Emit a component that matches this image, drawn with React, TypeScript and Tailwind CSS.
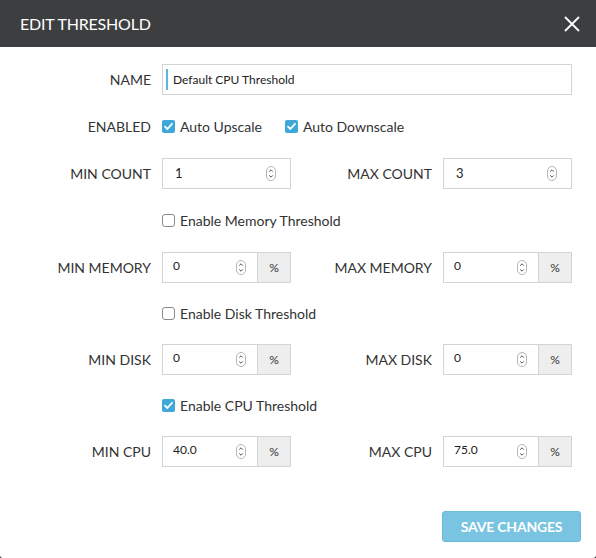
import React from "react";

const font = { fontFamily: "Lato, 'Open Sans', sans-serif" };

function Spinner() {
  return (
    <svg width="10" height="15" viewBox="0 0 10 15" className="shrink-0">
      <rect x="0.5" y="0.5" width="9" height="14" rx="4.5" fill="#fff" stroke="#b5b5b5" />
      <path d="M3.2 5.6 L5 3.8 L6.8 5.6" fill="none" stroke="#555" strokeWidth="1" />
      <path d="M3.2 9.4 L5 11.2 L6.8 9.4" fill="none" stroke="#555" strokeWidth="1" />
    </svg>
  );
}

function Check({ checked }: { checked: boolean }) {
  if (checked)
    return (
      <span className="w-[13px] h-[13px] rounded-[2px] bg-[#3ea8d8] flex items-center justify-center shrink-0">
        <svg width="11" height="11" viewBox="0 0 11 11">
          <path d="M2 5.6 L4.4 8 L9 2.8" fill="none" stroke="#fff" strokeWidth="1.8" strokeLinecap="round" strokeLinejoin="round" />
        </svg>
      </span>
    );
  return <span className="w-[13px] h-[13px] rounded-[3px] border border-[#8a8a8a] bg-white shrink-0" />;
}

function Label({ w, children }: { w: string; children: React.ReactNode }) {
  return <div className={`${w} text-right text-[14px] text-[#333] shrink-0 pr-[11px]`}>{children}</div>;
}

function CountInput({ value }: { value: string }) {
  return (
    <div className="w-[129px] h-[31px] border border-[#d4d4d4] bg-white flex items-center pl-[12px] pr-[14px] shrink-0">
      <span className="flex-1 text-[13px] text-[#222]">{value}</span>
      <Spinner />
    </div>
  );
}

function PctInput({ value }: { value: string }) {
  return (
    <div className="w-[129px] h-[31px] flex shrink-0">
      <div className="w-[96px] h-full border border-[#d4d4d4] bg-white flex items-center pl-[10px] pr-[11px]">
        <span className="flex-1 text-[12px] text-[#222] -mt-[3px]">{value}</span>
        <Spinner />
      </div>
      <div className="flex-1 h-full border border-l-0 border-[#d4d4d4] bg-[#eeeeee] flex items-center justify-center text-[12px] text-[#333]">
        %
      </div>
    </div>
  );
}

function CheckRow({ checked, label, mt }: { checked: boolean; label: string; mt: string }) {
  return (
    <div className={`${mt} h-[31px] flex items-center pl-[162px] gap-[5px] text-[14px] text-[#333]`}>
      <Check checked={checked} />
      <span>{label}</span>
    </div>
  );
}

export default function App() {
  return (
    <div className="w-[596px] h-[558px] bg-[#3a3a3a]" style={font}>
      <div className="w-[596px] h-[558px] bg-white rounded-b-[3px] flex flex-col">
        <div className="h-[47px] bg-[#3d3e40] flex items-center justify-between pl-[20px] pr-[15px]">
          <span className="text-white text-[16px] tracking-[-0.2px]">EDIT THRESHOLD</span>
          <svg width="18" height="18" viewBox="0 0 18 18">
            <path d="M2 2 L16 16 M16 2 L2 16" stroke="#fff" strokeWidth="1.8" />
          </svg>
        </div>

        <div className="pt-[17px] flex flex-col">
          <div className="h-[31px] flex items-center">
            <Label w="w-[162px]">NAME</Label>
            <div className="w-[410px] h-[31px] border border-[#d4d4d4] bg-white flex items-center pl-[3px]">
              <span className="w-[2px] h-[21px] bg-[#5ab6de]" />
              <span className="ml-[5px] text-[12px] text-[#222]">Default CPU Threshold</span>
            </div>
          </div>

          <div className="mt-4 h-[31px] flex items-center">
            <Label w="w-[162px]">ENABLED</Label>
            <div className="flex items-center gap-[5px] text-[14px] text-[#333]">
              <Check checked />
              <span>Auto Upscale</span>
            </div>
            <div className="flex items-center gap-[5px] text-[14px] text-[#333] ml-[23px]">
              <Check checked />
              <span>Auto Downscale</span>
            </div>
          </div>

          <div className="mt-4 h-[31px] flex items-center">
            <Label w="w-[162px]">MIN COUNT</Label>
            <CountInput value="1" />
            <Label w="w-[152px]">MAX COUNT</Label>
            <CountInput value="3" />
          </div>

          <CheckRow checked={false} label="Enable Memory Threshold" mt="mt-4" />

          <div className="mt-4 h-[31px] flex items-center">
            <Label w="w-[162px]">MIN MEMORY</Label>
            <PctInput value="0" />
            <Label w="w-[152px]">MAX MEMORY</Label>
            <PctInput value="0" />
          </div>

          <CheckRow checked={false} label="Enable Disk Threshold" mt="mt-[15px]" />

          <div className="mt-[15px] h-[31px] flex items-center">
            <Label w="w-[162px]">MIN DISK</Label>
            <PctInput value="0" />
            <Label w="w-[152px]">MAX DISK</Label>
            <PctInput value="0" />
          </div>

          <CheckRow checked label="Enable CPU Threshold" mt="mt-[15px]" />

          <div className="mt-[15px] h-[31px] flex items-center">
            <Label w="w-[162px]">MIN CPU</Label>
            <PctInput value="40.0" />
            <Label w="w-[152px]">MAX CPU</Label>
            <PctInput value="75.0" />
          </div>

          <div className="mt-[44px] flex justify-end pr-[15px]">
            <button className="w-[139px] h-[31px] rounded-[3px] bg-[#79c4e1] border border-[#6dbad8] text-white text-[14px] font-bold tracking-[-0.2px]">
              SAVE CHANGES
            </button>
          </div>
        </div>
      </div>
    </div>
  );
}
